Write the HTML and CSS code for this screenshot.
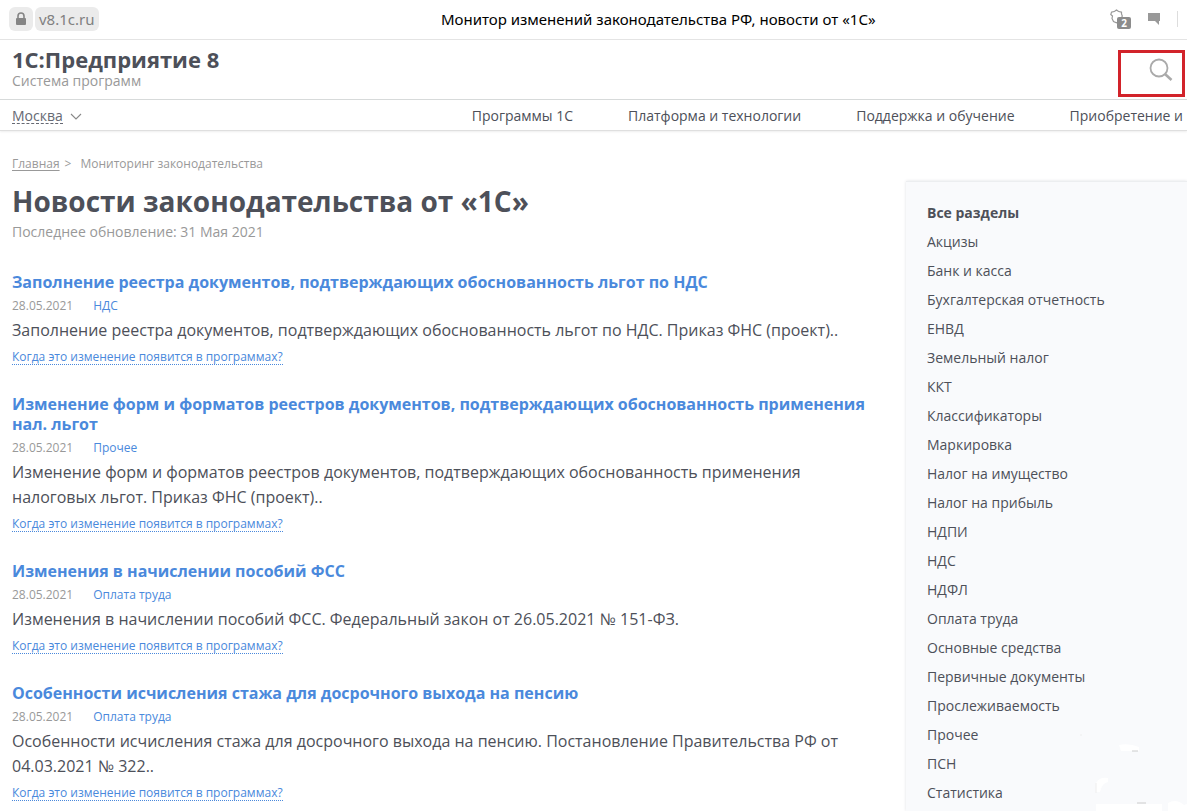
FILE: index.html
```html
<!DOCTYPE html>
<html lang="ru">
<head>
<meta charset="utf-8">
<title>Монитор изменений законодательства РФ, новости от «1С»</title>
<link rel="stylesheet" href="styles.css">
</head>
<body>
<div class="browser-bar">
  <div class="address">
    <button class="chip lock" type="button" aria-label="Защищённое соединение">
      <svg width="12" height="14" viewBox="0 0 12 14"><path d="M3 6V4a3 3 0 0 1 6 0v2" fill="none" stroke="#858585" stroke-width="1.6"/><rect x="1" y="6" width="10" height="7" rx="1" fill="#858585"/></svg>
    </button>
    <a class="chip domain" href="#">v8.1c.ru</a>
  </div>
  <div class="page-title">Монитор изменений законодательства РФ, новости от «1С»</div>
  <div class="bar-tools">
    <button class="tool shield" type="button" aria-label="Защита">
      <svg width="14" height="16" viewBox="0 0 14 16"><path d="M6.500 1C8 2.500 9.500 3 11.500 3.200V5l.8 2-1 2.500-2.300 3-2.500 1.300-3-1.300L2 9.500 2.500 7 .8 5.500 1.500 3.200C3.500 3 5 2.500 6.500 1z" fill="none" stroke="#999" stroke-width="1.200"/></svg>
      <span class="count">2</span>
    </button>
    <button class="tool" type="button" aria-label="Отзывы">
      <svg width="12" height="12" viewBox="0 0 12 12"><path d="M0 0h12v8h-1v4L7 8H0z" fill="#999"/></svg>
    </button>
    <span class="divider"></span>
  </div>
</div>

<header class="site-header">
  <div class="brand">
    <a class="brand-name" href="#">1С:Предприятие 8</a>
    <span class="brand-note">Система программ</span>
  </div>
  <button class="search" type="button" aria-label="Поиск">
    <svg width="24" height="24" viewBox="0 0 24 24" fill="none" stroke="#aaa"><circle cx="10" cy="10" r="8.500" stroke-width="1.800"/><path d="M16 16l6.500 6" stroke-width="2.600"/></svg>
  </button>
</header>

<nav class="main-nav">
  <button class="city" type="button"><span class="city-name">Москва</span>
    <svg width="12" height="7" viewBox="0 0 12 7"><path d="M1 1l5 5 5-5" fill="none" stroke="#888" stroke-width="1.100"/></svg>
  </button>
  <div class="nav-links">
    <a href="#">Программы 1С</a>
    <a href="#">Платформа и технологии</a>
    <a href="#">Поддержка и обучение</a>
    <a href="#">Приобретение и</a>
  </div>
</nav>

<div class="layout">
  <main class="content">
    <div class="crumbs"><a href="#">Главная</a><span>&gt;</span><span class="current">Мониторинг законодательства</span></div>
    <h1>Новости законодательства от «1С»</h1>
    <p class="updated">Последнее обновление: 31 Мая 2021</p>

    <article class="news">
      <h2><a href="#">Заполнение реестра документов, подтверждающих обоснованность льгот по НДС</a></h2>
      <div class="meta"><time datetime="2021-05-28">28.05.2021</time><a href="#">НДС</a></div>
      <p>Заполнение реестра документов, подтверждающих обоснованность льгот по НДС. Приказ ФНС (проект)..</p>
      <a class="when" href="#">Когда это изменение появится в программах?</a>
    </article>
    <article class="news">
      <h2><a href="#">Изменение форм и форматов реестров документов, подтверждающих обоснованность применения нал. льгот</a></h2>
      <div class="meta"><time datetime="2021-05-28">28.05.2021</time><a href="#">Прочее</a></div>
      <p>Изменение форм и форматов реестров документов, подтверждающих обоснованность применения налоговых льгот. Приказ ФНС (проект)..</p>
      <a class="when" href="#">Когда это изменение появится в программах?</a>
    </article>
    <article class="news">
      <h2><a href="#">Изменения в начислении пособий ФСС</a></h2>
      <div class="meta"><time datetime="2021-05-28">28.05.2021</time><a href="#">Оплата труда</a></div>
      <p>Изменения в начислении пособий ФСС. Федеральный закон от 26.05.2021 № 151-ФЗ.</p>
      <a class="when" href="#">Когда это изменение появится в программах?</a>
    </article>
    <article class="news">
      <h2><a href="#">Особенности исчисления стажа для досрочного выхода на пенсию</a></h2>
      <div class="meta"><time datetime="2021-05-28">28.05.2021</time><a href="#">Оплата труда</a></div>
      <p>Особенности исчисления стажа для досрочного выхода на пенсию. Постановление Правительства РФ от 04.03.2021 № 322..</p>
      <a class="when" href="#">Когда это изменение появится в программах?</a>
    </article>
  </main>

  <aside class="sections">
    <ul>
      <li><a class="active" href="#">Все разделы</a></li>
      <li><a href="#">Акцизы</a></li>
      <li><a href="#">Банк и касса</a></li>
      <li><a href="#">Бухгалтерская отчетность</a></li>
      <li><a href="#">ЕНВД</a></li>
      <li><a href="#">Земельный налог</a></li>
      <li><a href="#">ККТ</a></li>
      <li><a href="#">Классификаторы</a></li>
      <li><a href="#">Маркировка</a></li>
      <li><a href="#">Налог на имущество</a></li>
      <li><a href="#">Налог на прибыль</a></li>
      <li><a href="#">НДПИ</a></li>
      <li><a href="#">НДС</a></li>
      <li><a href="#">НДФЛ</a></li>
      <li><a href="#">Оплата труда</a></li>
      <li><a href="#">Основные средства</a></li>
      <li><a href="#">Первичные документы</a></li>
      <li><a href="#">Прослеживаемость</a></li>
      <li><a href="#">Прочее</a></li>
      <li><a href="#">ПСН</a></li>
      <li><a href="#">Статистика</a></li>
    </ul>
    <svg class="specks" width="112" height="80" viewBox="0 0 112 80" aria-hidden="true">
      <path d="M44 14q10-2 20 2v4H46zM21 52q3-6 12-5v4q-6 1-8 10h-4zM21 73h66v7H21zM93 72q8-5 16 2l3-1v7H93z" fill="#fff"/>
      <path d="M57 20h6M62 72h9" stroke="#ccc"/><path d="M5 4h2M21 52v10" stroke="#eee"/>
    </svg>
  </aside>
</div>
</body>
</html>
```
FILE: styles.css
```css
* { box-sizing: border-box; }

body {
  margin: 0;
  min-height: 100vh;
  display: flex;
  flex-direction: column;
  background: #fff;
  color: #4d5059;
  font: 14px/20px "Open Sans", "Noto Sans", sans-serif;
}

a { color: inherit; text-decoration: none; }
button { padding: 0; border: 0; background: none; color: inherit; font: inherit; cursor: pointer; }
svg { display: block; }
h1, h2, p, ul { margin: 0; padding: 0; }

.browser-bar {
  display: grid;
  grid-template-columns: 10fr auto 7fr;
  align-items: center;
  height: 40px;
  padding: 0 9px 2px;
  border-bottom: 1px solid #e4e4e4;
}
.address { display: flex; gap: 2px; }
.chip {
  display: flex;
  align-items: center;
  justify-content: center;
  height: 24px;
  border-radius: 6px;
  background: #ebebeb;
  color: #808080;
}
.lock { width: 24px; }
.domain { padding: 0 4px; font: 15px/24px "Noto Sans", sans-serif; }
.page-title { color: #000; font: 15px/20px "Noto Sans", sans-serif; }
.bar-tools { display: flex; align-items: center; justify-content: flex-end; gap: 17px; }
.tool { position: relative; }
.shield { width: 21px; height: 20px; }
.shield svg { margin-bottom: 4px; }
.count {
  position: absolute;
  right: 0;
  bottom: 0;
  width: 14px;
  height: 12px;
  border-radius: 2px;
  background: #8c8c8c;
  color: #fff;
  font: bold 10px/12px "Open Sans", sans-serif;
}
.divider { width: 1px; height: 16px; background: #ddd; }

.site-header {
  display: flex;
  justify-content: space-between;
  align-items: flex-end;
  height: 60px;
  padding: 0 2px 2px 12px;
  border-bottom: 1px solid #d6d9d9;
}
.brand { display: flex; flex-direction: column; padding-bottom: 7px; }
.brand-name { font-size: 22px; line-height: 26px; font-weight: 700; }
.brand-note { color: #999; line-height: 18px; }
.search {
  display: flex;
  justify-content: flex-end;
  width: 67px;
  height: 47px;
  padding: 5px 9px;
  border: 3px solid #d2232a;
}

.main-nav {
  display: flex;
  align-items: center;
  justify-content: space-between;
  height: 31px;
  padding: 2px 4px 0 12px;
  border-bottom: 1px solid #dfdfdf;
  box-shadow: 0 1px 2px #eee;
}
.city { display: flex; align-items: center; gap: 7px; color: #666973; }
.city-name { line-height: 14px; border-bottom: 1px dashed #666973; }
.nav-links { display: flex; gap: 55px; white-space: nowrap; }

.layout { display: flex; flex: 1; }
.content { flex: 1; min-width: 0; padding: 24px 32px 0 12px; }

.crumbs { display: flex; color: #999; font-size: 12px; line-height: 18px; gap: 5px; }
.crumbs a { text-decoration: underline; text-underline-offset: 2px; }
.crumbs .current { padding-left: 4px; }
h1 { margin: 8px 0 1px; font-size: 28px; line-height: 40px; }
.updated { color: #999; }

.news { padding-top: 29px; }
.updated + .news { padding-top: 30px; }
.news h2 { color: #4a89dc; font-size: 16px; line-height: 20px; }
.meta { display: flex; gap: 20px; margin: 5px 0 3px; color: #999; font-size: 12px; line-height: 18px; }
.meta a, .when { color: #4a89dc; }
.news p { font-size: 16px; line-height: 25px; }
.when {
  display: block;
  width: fit-content;
  margin-top: 6px;
  border-bottom: 1px dotted #4a89dc;
  font-size: 12px;
  line-height: 15px;
}

.sections {
  position: relative;
  width: 281px;
  margin-top: 50px;
  padding: 16px 20px 0 21px;
  border-top: 1px solid #eceef0;
  background: #f9fafc;
  box-shadow: 0 0 3px #dfe1e4;
}
.sections ul { list-style: none; }
.sections li { line-height: 29px; }
.sections .active { font-weight: 700; }
.specks { position: absolute; right: 0; bottom: 0; pointer-events: none; }
```
